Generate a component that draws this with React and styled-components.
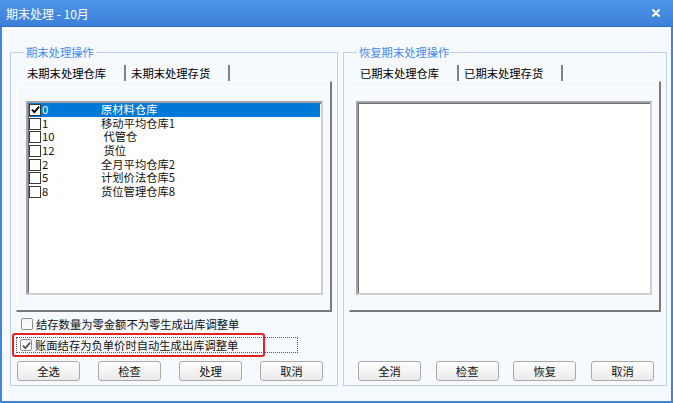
import React from "react";
import styled, { createGlobalStyle } from "styled-components";

const GlobalStyle = createGlobalStyle`
  html, body {
    margin: 0;
    padding: 0;
    background: #ffffff;
  }
  body {
    font-family: "Noto Sans CJK SC", "Noto Sans", sans-serif;
  }
`;

const Window = styled.div`
  width: 673px;
  height: 403px;
  box-sizing: border-box;
  display: flex;
  flex-direction: column;
  background: #f6f9fe;
  border: 2px solid #3f86da;
  border-top: none;
`;

const TitleBar = styled.div`
  height: 27px;
  margin: 0 -2px;
  display: flex;
  align-items: center;
  justify-content: space-between;
  padding: 0 12px 0 6px;
  background: linear-gradient(#4c95e8, #3d80d8);
  border-bottom: 1px solid #2f6fc6;
  box-sizing: border-box;
  color: #ffffff;
  font-size: 12px;
`;

const Body = styled.div`
  flex: 1;
  display: flex;
  gap: 5px;
  padding: 18px 4px 15px 8px;
  min-height: 0;
`;

const Group = styled.fieldset`
  margin: 0;
  min-width: 0;
  width: ${(p) => p.$width}px;
  box-sizing: border-box;
  border: 1px solid #bcd0e8;
  padding: 2px 5px 4px 5px;
  display: flex;
  flex-direction: column;
`;

const Legend = styled.legend`
  margin-left: 8px;
  padding: 0 2px;
  font-size: 11.3px;
  line-height: 14px;
  color: #3f8cef;
`;

const TabStrip = styled.div`
  height: 20px;
  display: flex;
  align-items: center;
  padding-left: ${(p) => p.$indent}px;
`;

const Tab = styled.div`
  height: 16px;
  margin-top: 3px;
  display: flex;
  align-items: center;
  padding: 0 18px 0 ${(p) => (p.$active ? 11 : 5)}px;
  font-size: 11.3px;
  color: #000000;
  border-right: 2px solid #808080;
`;

const TabPane = styled.div`
  height: 231px;
  box-sizing: border-box;
  padding: 19px 7px 15px ${(p) => p.$left}px;
  border-right: 2px solid #7a7a7a;
  border-bottom: 2px solid #7a7a7a;
  border-top: 1px solid #ffffff;
  border-left: 1px solid #ffffff;
  display: flex;
`;

const ListBox = styled.div`
  flex: 1;
  background: #ffffff;
  border: 2px solid #a3a3a3;
  border-right-color: #d0d0d0;
  border-bottom-color: #d0d0d0;
  box-shadow: inset 1px 1px 0 #6d6d6d;
  padding: 0 1px;
`;

const ListRow = styled.div`
  height: 13.7px;
  display: flex;
  align-items: center;
  font-size: 11.3px;
  line-height: 13.7px;
  white-space: pre;
  background: ${(p) => (p.$selected ? "#0078d7" : "transparent")};
  color: ${(p) => (p.$selected ? "#ffffff" : "#111111")};
`;

const Box = styled.span`
  width: 12px;
  height: 12px;
  box-sizing: border-box;
  border: 1px solid #3a3a3a;
  background: #ffffff;
  display: flex;
  align-items: center;
  justify-content: center;
  flex: none;
`;

const Code = styled.span`
  width: 59px;
  padding-left: 1px;
`;

const Options = styled.div`
  flex: 1;
  display: flex;
  flex-direction: column;
  padding-top: 2px;
`;

const OptionRow = styled.label`
  position: relative;
  height: 16px;
  margin: 2px 0 3px 0;
  display: flex;
  align-items: center;
  gap: 3px;
  width: ${(p) => (p.$focus ? "282px" : "auto")};
  box-sizing: border-box;
  padding-left: ${(p) => (p.$focus ? "3px" : "4px")};
  border: ${(p) => (p.$focus ? "1px dotted #555" : "1px solid transparent")};
  font-size: 11.3px;
  color: #111111;
`;

const SoftBox = styled.span`
  width: 12px;
  height: 12px;
  box-sizing: border-box;
  border: 1px solid #8e8e8e;
  border-radius: 2px;
  background: linear-gradient(#f4f4f4, #ffffff);
  display: flex;
  align-items: center;
  justify-content: center;
  flex: none;
`;

const Highlight = styled.span`
  position: absolute;
  left: -5px;
  top: -5px;
  width: 253px;
  height: 24px;
  box-sizing: border-box;
  border: 2px solid #e32321;
  border-radius: 3px;
  pointer-events: none;
`;

const ButtonRow = styled.div`
  display: flex;
  justify-content: space-between;
  padding: 0 ${(p) => p.$right}px 0 ${(p) => p.$left}px;
`;

const Button = styled.button`
  width: 63px;
  height: 20px;
  box-sizing: border-box;
  border: 1px solid #a9a9a9;
  border-radius: 3px;
  background: linear-gradient(#fdfdfd, #ebebeb);
  font-family: "Noto Sans CJK SC", sans-serif;
  font-size: 11.3px;
  color: #111111;
  padding: 0;
`;

const Check = ({ color = "#000", w = 9 }) => (
  <svg width={w} height={w} viewBox="0 0 10 10">
    <path d="M1 5.2 L3.8 8 L9 1.8" fill="none" stroke={color} strokeWidth="2" />
  </svg>
);

const rows = [
  { code: "0", name: "原材料仓库", checked: true, selected: true },
  { code: "1", name: "移动平均仓库1" },
  { code: "10", name: " 代管仓" },
  { code: "12", name: " 货位" },
  { code: "2", name: "全月平均仓库2" },
  { code: "5", name: "计划价法仓库5" },
  { code: "8", name: "货位管理仓库8" },
];

export default function App() {
  return (
    <>
      <GlobalStyle />
      <Window>
        <TitleBar>
          <span>期末处理 - 10月</span>
          <svg width="10" height="10" viewBox="0 0 10 10">
            <path d="M1.5 1.5 L8.5 8.5 M8.5 1.5 L1.5 8.5" stroke="#fff" strokeWidth="2" />
          </svg>
        </TitleBar>
        <Body>
          <Group $width={328}>
            <Legend>期末处理操作</Legend>
            <TabStrip $indent={0}>
              <Tab $active>未期末处理仓库</Tab>
              <Tab>未期末处理存货</Tab>
            </TabStrip>
            <TabPane $left={9}>
              <ListBox>
                {rows.map((r) => (
                  <ListRow key={r.code} $selected={r.selected}>
                    <Box>{r.checked && <Check />}</Box>
                    <Code>{r.code}</Code>
                    <span>{r.name}</span>
                  </ListRow>
                ))}
              </ListBox>
            </TabPane>
            <Options>
              <OptionRow>
                <SoftBox />
                结存数量为零金额不为零生成出库调整单
              </OptionRow>
              <OptionRow $focus>
                <SoftBox>
                  <Check color="#555" w={9} />
                </SoftBox>
                账面结存为负单价时自动生成出库调整单
                <Highlight />
              </OptionRow>
            </Options>
            <ButtonRow $left={1} $right={9}>
              <Button>全选</Button>
              <Button>检查</Button>
              <Button>处理</Button>
              <Button>取消</Button>
            </ButtonRow>
          </Group>
          <Group $width={324}>
            <Legend>恢复期末处理操作</Legend>
            <TabStrip $indent={0}>
              <Tab $active>已期末处理仓库</Tab>
              <Tab>已期末处理存货</Tab>
            </TabStrip>
            <TabPane $left={6}>
              <ListBox />
            </TabPane>
            <Options />
            <ButtonRow $left={9} $right={7}>
              <Button>全消</Button>
              <Button>检查</Button>
              <Button>恢复</Button>
              <Button>取消</Button>
            </ButtonRow>
          </Group>
        </Body>
      </Window>
    </>
  );
}
